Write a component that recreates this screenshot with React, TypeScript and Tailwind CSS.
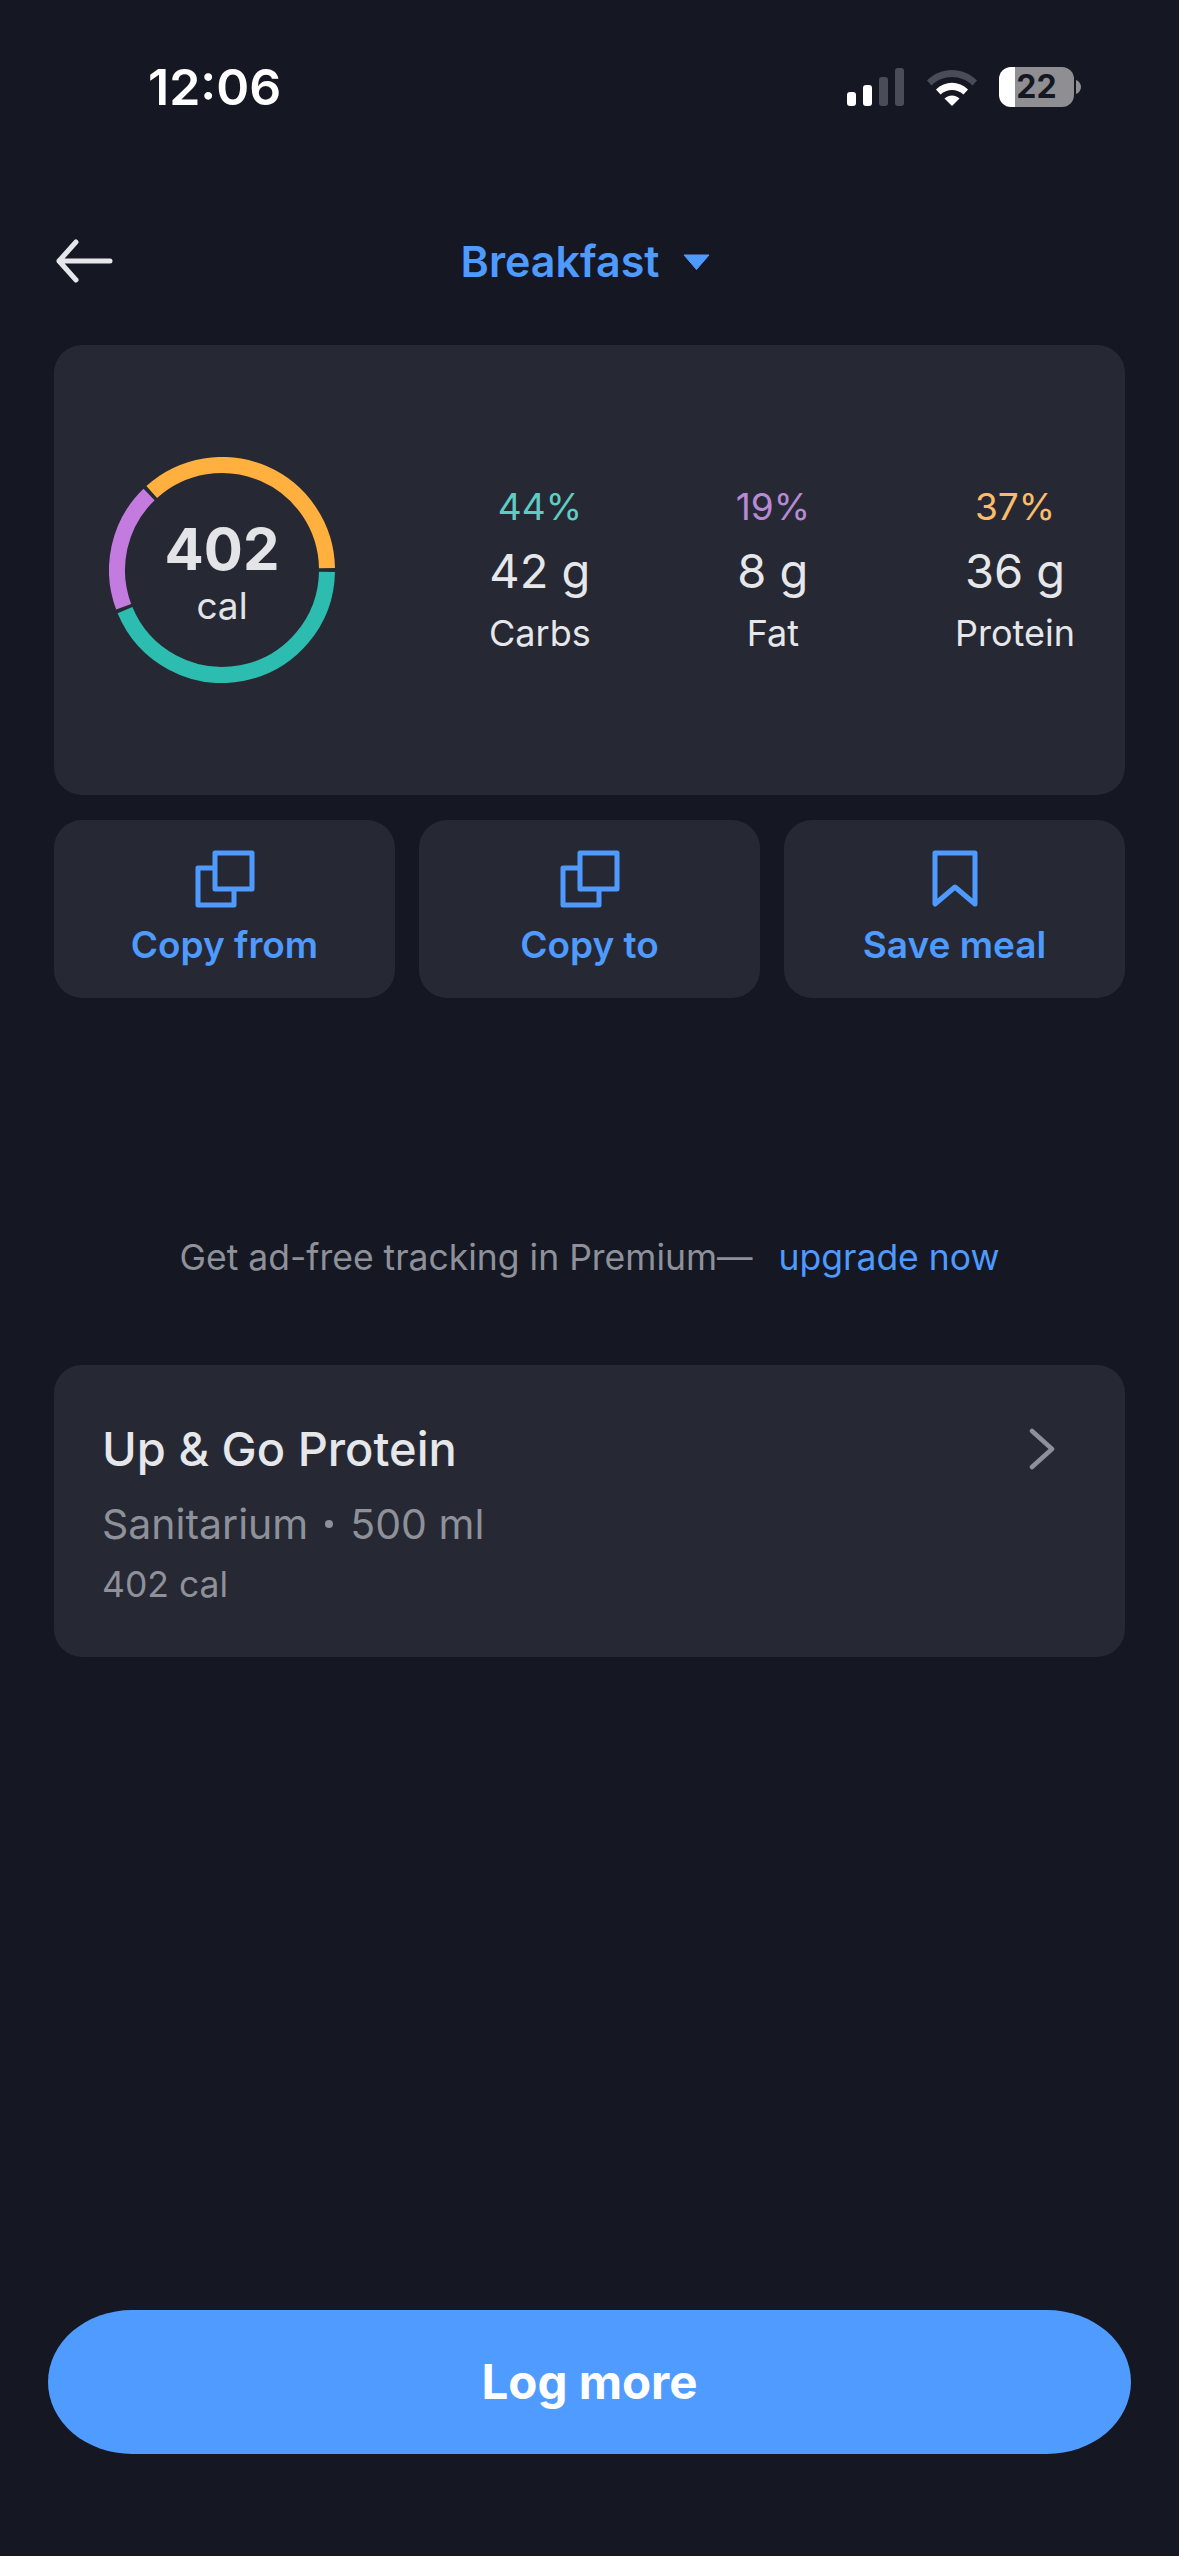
const MACROS = [
  { pct: '44%', amount: '42 g', label: 'Carbs', color: 'text-[#5fcdc3]' },
  { pct: '19%', amount: '8 g', label: 'Fat', color: 'text-[#b88ad6]' },
  { pct: '37%', amount: '36 g', label: 'Protein', color: 'text-[#fbbd6b]' },
];

// point on the ring, 0deg is 3 o'clock and it runs clockwise
function arc(from: number, to: number, r: number) {
  const rad = (d: number) => (d * Math.PI) / 180;
  const x1 = 113 + r * Math.cos(rad(from));
  const y1 = 113 + r * Math.sin(rad(from));
  const x2 = 113 + r * Math.cos(rad(to));
  const y2 = 113 + r * Math.sin(rad(to));
  const large = to - from > 180 ? 1 : 0;
  return `M ${x1} ${y1} A ${r} ${r} 0 ${large} 1 ${x2} ${y2}`;
}

function CopyIcon() {
  return (
    <svg width="60" height="58" viewBox="0 0 60 58" fill="none" stroke="#4e9aff" strokeWidth="5" strokeLinejoin="round">
      <rect x="20" y="3" width="37" height="36" />
      <path d="M20 18H3v37h36V39" />
    </svg>
  );
}

function BookmarkIcon() {
  return (
    <svg width="46" height="58" viewBox="0 0 46 58" fill="none" stroke="#4e9aff" strokeWidth="5" strokeLinejoin="round">
      <path d="M3 3h40v51L23 37 3 54z" />
    </svg>
  );
}

function ActionButton({ label, icon }: { label: string; icon: React.ReactNode }) {
  return (
    <div className="flex h-[178px] flex-1 flex-col items-center rounded-[28px] bg-[#262933] pt-[30px]">
      <div className="flex h-[58px] items-center">{icon}</div>
      <span className="mt-[17px] text-[37px] leading-[40px] font-semibold text-[#4e9aff]">{label}</span>
    </div>
  );
}

export default function App() {
  return (
    <div className="flex h-[2556px] w-[1179px] flex-col overflow-hidden bg-[#151823] font-['Inter',sans-serif]">
      {/* Status bar */}
      <div className="mt-[54px] flex h-[66px] items-center justify-between pr-[98px] pl-[148px]">
        <span className="text-[50px] leading-none font-semibold text-white">12:06</span>
        <div className="flex items-center">
          <svg width="57" height="38" viewBox="0 0 57 38">
            <rect x="0" y="24" width="9" height="14" rx="3" fill="#fff" />
            <rect x="16" y="17" width="9" height="21" rx="3" fill="#fff" />
            <rect x="32" y="9" width="9" height="29" rx="3" fill="#4a4c57" />
            <rect x="48" y="0" width="9" height="38" rx="3" fill="#4a4c57" />
          </svg>
          <svg className="ml-[23px]" width="50" height="38" viewBox="0 0 50 38">
            <path d="M0 12.5C13.5-1.5 36.5-1.5 50 12.5l-4.5 5C34.5 6 15.5 6 4.500 17.500z" fill="#4a4c57" />
            <path d="M9 21.500c9-9 23-9 32 0l-4.500 5c-6.500-6-16.500-6-23 0z" fill="#fff" />
            <path d="M17.500 30.500c4.500-4 10.500-4 15 0L25 38z" fill="#fff" />
          </svg>
          <div className="ml-[22px] flex h-[40px] w-[75px] items-center justify-center rounded-[12px] bg-[linear-gradient(90deg,#fff_21%,#8e8e93_21%)] text-[32px] leading-none font-bold text-[#151823]">
            22
          </div>
          <svg className="ml-[2px]" width="5" height="14" viewBox="0 0 5 14">
            <path d="M0 0c3 1 5 4 5 7s-2 6-5 7z" fill="#8e8e93" />
          </svg>
        </div>
      </div>

      {/* Nav */}
      <div className="relative mt-[109px] flex h-[64px] items-center justify-center">
        <svg className="absolute top-[10px] left-[55px]" width="58" height="44" viewBox="0 0 58 44" fill="none" stroke="#e6e7ea" strokeWidth="5" strokeLinecap="round" strokeLinejoin="round">
          <path d="M21 3 4 22l17 19M4 22h51" />
        </svg>
        <div className="mr-[8px] flex items-center">
          <span className="text-[43px] leading-none font-semibold text-[#4e9aff]">Breakfast</span>
          <svg className="mt-[1px] ml-[24px]" width="27" height="16" viewBox="0 0 27 16">
            <path d="M1 1h25L13.500 15.500z" fill="#4e9aff" stroke="#4e9aff" strokeLinejoin="round" />
          </svg>
        </div>
      </div>

      {/* Summary */}
      <div className="mx-[54px] mt-[52px] flex h-[450px] items-center rounded-[28px] bg-[#262933] pr-[50px] pl-[55px]">
        <div className="relative h-[226px] w-[226px]">
          <svg width="226" height="226" viewBox="0 0 226 226" fill="none" strokeWidth="16">
            <path d={arc(1, 157.5, 105)} stroke="#2dbdb0" />
            <path d={arc(159.5, 226, 105)} stroke="#c47be0" />
            <path d={arc(228, 359, 105)} stroke="#ffb03e" />
          </svg>
          <div className="absolute inset-0 flex flex-col items-center justify-center pt-[3px]">
            <span className="text-[58px] leading-[64px] font-bold text-[#e3e4e7]">402</span>
            <span className="mt-[5px] text-[37px] leading-[40px] text-[#e3e4e7]">cal</span>
          </div>
        </div>
        <div className="ml-auto flex gap-[145px]">
          {MACROS.map((m) => (
            <div key={m.label} className="flex flex-col items-center">
              <span className={`text-[37px] leading-[40px] ${m.color}`}>{m.pct}</span>
              <span className="mt-[16px] text-[47px] leading-[56px] text-[#e6e7ea]">{m.amount}</span>
              <span className="mt-[14px] text-[36px] leading-[40px] text-[#e6e7ea]">{m.label}</span>
            </div>
          ))}
        </div>
      </div>

      {/* Actions */}
      <div className="mx-[54px] mt-[25px] flex gap-[24px]">
        <ActionButton label="Copy from" icon={<CopyIcon />} />
        <ActionButton label="Copy to" icon={<CopyIcon />} />
        <ActionButton label="Save meal" icon={<BookmarkIcon />} />
      </div>

      {/* Upsell */}
      <div className="mt-[240px] flex h-[40px] items-center justify-center text-[35.500px] leading-[40px]">
        <span className="text-[#8f919a]">Get ad-free tracking in Premium—</span>
        <span className="ml-[26px] text-[#4e9aff]">upgrade now</span>
      </div>

      {/* Food item */}
      <div className="mx-[54px] mt-[87px] flex h-[292px] items-start justify-between rounded-[28px] bg-[#262933] pt-[59px] pr-[70px] pl-[48px]">
        <div className="flex flex-col">
          <span className="text-[47px] leading-[50px] font-medium text-[#e6e7ea]">Up &amp; Go Protein</span>
          <span className="mt-[25px] flex items-center text-[41px] leading-[50px] text-[#8f919a]">
            Sanitarium
            <span className="mx-[17px] h-[8px] w-[8px] rounded-full bg-[#8f919a]" />
            500 ml
          </span>
          <span className="mt-[16px] text-[35.500px] leading-[40px] text-[#8f919a]">402 cal</span>
        </div>
        <svg className="mt-[4px]" width="26" height="42" viewBox="0 0 26 42" fill="none" stroke="#8f919a" strokeWidth="4.500" strokeLinecap="round" strokeLinejoin="round">
          <path d="M3 3l20 18L3 39" />
        </svg>
      </div>

      {/* Log more */}
      <div className="mx-[48px] mt-auto mb-[102px] flex h-[144px] items-center justify-center rounded-[84px/72px] bg-[#4f9bff]">
        <span className="text-[47.500px] leading-none font-bold text-white">Log more</span>
      </div>
    </div>
  );
}
